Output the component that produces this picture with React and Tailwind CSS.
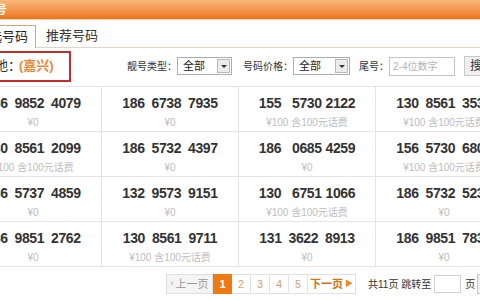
import React from 'react';

const rows = [
  [
    { n: ['186', '9852', '4079'], p: '0' },
    { n: ['186', '6738', '7935'], p: '0' },
    { n: ['155', '5730', '2122'], p: '100', wide: true },
    { n: ['130', '8561', '3533'], p: '100' },
  ],
  [
    { n: ['130', '8561', '2099'], p: '100' },
    { n: ['186', '5732', '4397'], p: '0' },
    { n: ['186', '0685', '4259'], p: '0', wide: true },
    { n: ['156', '5730', '6800'], p: '100' },
  ],
  [
    { n: ['186', '5737', '4859'], p: '0' },
    { n: ['132', '9573', '9151'], p: '0' },
    { n: ['130', '6751', '1066'], p: '100', wide: true },
    { n: ['186', '5732', '5233'], p: '0' },
  ],
  [
    { n: ['186', '9851', '2762'], p: '0' },
    { n: ['130', '8561', '9711'], p: '100' },
    { n: ['131', '3622', '8913'], p: '0' },
    { n: ['186', '9851', '7833'], p: '0' },
  ],
];

function Select({ w }) {
  return (
    <div className={`h-[18px] ${w} border border-[#a7aeb8] bg-white flex items-center justify-between pl-[5px] pr-[1px]`}>
      <span className="text-[11px] text-[#222]">全部</span>
      <span className="w-[13px] h-[14px] bg-[#ececec] border border-[#b8b8b8] flex items-center justify-center">
        <span className="w-0 h-0 border-l-[3px] border-r-[3px] border-t-[3px] border-l-transparent border-r-transparent border-t-[#333]" />
      </span>
    </div>
  );
}

function Cell({ item }) {
  return (
    <div className="h-[45px] border-r border-b border-[#e4e4e4] flex flex-col items-center">
      <div className={`mt-[8px] flex text-[14px] font-bold text-[#333] tracking-[-0.4px] leading-[16px] ${item.wide ? '' : 'gap-[7px]'}`}>
        <span className={item.wide ? 'mr-[11px]' : ''}>{item.n[0]}</span>
        <span className={item.wide ? 'mr-[4px]' : ''}>{item.n[1]}</span>
        <span>{item.n[2]}</span>
      </div>
      <div className="mt-[5px] text-[10px] leading-[14px] text-[#bdbdbd]">
        {item.p === '0' ? '¥0' : <>¥100&nbsp;含100元话费</>}
      </div>
    </div>
  );
}

export default function App() {
  return (
    <div className="w-[480px] h-[300px] overflow-hidden bg-white text-[#333] font-['Liberation_Sans','Noto_Sans_CJK_SC',sans-serif]">
      <div className="ml-[-35px] w-[560px]">
        {/* header */}
        <div className="h-[20px] bg-gradient-to-b from-[#f9b878] to-[#ec7516] border-b border-[#f6d2aa] pl-[18px] flex items-center">
          <span className="text-[12px] text-white font-bold">选号</span>
        </div>

        {/* tabs */}
        <div className="h-[28px] flex items-end border-b border-[#e2d6c6] pl-[3px]">
          <div className="h-[23px] px-[7px] border border-b-0 border-[#d7a578] bg-white -mb-px flex items-center text-[13px] text-[#222]">
            自选号码
          </div>
          <div className="h-[22px] pl-[10px] flex items-center text-[13px] text-[#333]">推荐号码</div>
        </div>

        {/* filters */}
        <div className="h-[38px] pt-[2px] pb-[4px] flex items-center text-[10px]">
          <div className="h-[31px] w-[106px] border-2 border-[#c92a2a] flex items-center pl-[2px] text-[13px]">
            <span>归属地：</span>
            <span className="ml-[-2px] font-bold text-[#e6893a]">(嘉兴)</span>
          </div>
          <span className="ml-[56px]">靓号类型：</span>
          <Select w="w-[55px]" />
          <span className="ml-[11px]">号码价格：</span>
          <Select w="w-[57px]" />
          <span className="ml-[9px]">尾号：</span>
          <div className="h-[19px] w-[66px] border border-[#c4c4c4] flex items-center pl-[3px] text-[10px] text-[#b5b5b5]">
            2-4位数字
          </div>
          <div className="ml-[9px] h-[20px] px-[5px] border border-[#c8c8c8] bg-[#efefef] flex items-center text-[12px]">
            搜索
          </div>
        </div>

        {/* number grid */}
        <div className="grid grid-cols-[repeat(4,137px)] border-t border-[#e4e4e4]">
          {rows.flat().map((item, i) => (
            <Cell key={i} item={item} />
          ))}
        </div>

        {/* pagination */}
        <div className="mt-[7px] pl-[201px] flex items-center h-[20px] text-[11px]">
          <div className="h-[20px] w-[47px] border border-[#dedede] bg-[#f4f4f4] text-[#999] flex items-center justify-center">
            <span className="text-[9px] mr-[2px]">‹</span>上一页
          </div>
          <div className="h-[20px] w-[19px] bg-[#f07a12] text-white font-bold flex items-center justify-center">1</div>
          {['2', '3', '4', '5'].map(n => (
            <div key={n} className="h-[20px] w-[19px] border border-l-0 border-[#e2e2e2] text-[#d6a067] flex items-center justify-center">
              {n}
            </div>
          ))}
          <div className="h-[20px] w-[48px] border border-l-0 border-[#e2e2e2] text-[#c9751c] font-bold flex items-center justify-center">
            下一页<span className="ml-[2px] text-[8px] text-[#f08a20]">▶</span>
          </div>
          <span className="ml-[12px] text-[10px]">共11页 跳转至</span>
          <div className="ml-[3px] h-[18px] w-[27px] border border-[#cfcfcf]" />
          <span className="ml-[4px] text-[10px]">页</span>
          <div className="ml-[2px] h-[20px] w-[30px] border border-[#c8c8c8] bg-[#efefef]" />
        </div>
      </div>
    </div>
  );
}
